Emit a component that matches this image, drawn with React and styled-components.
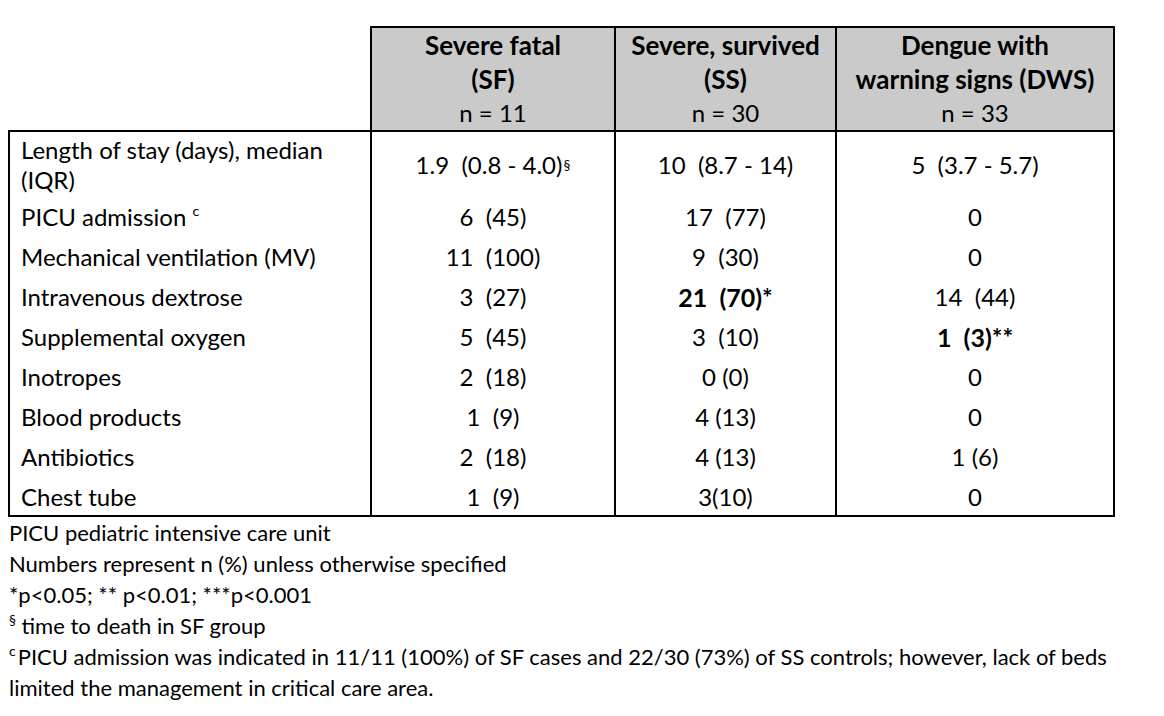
import React from "react";
import styled, { createGlobalStyle } from "styled-components";

const GlobalStyle = createGlobalStyle`
  body {
    margin: 0;
    background: #fff;
    color: #000;
    font-family: Lato, "Liberation Sans", sans-serif;
  }
`;

const columns = [
  { title: ["Severe fatal", "(SF)"], n: 11 },
  { title: ["Severe, survived", "(SS)"], n: 30 },
  { title: ["Dengue with", "warning signs (DWS)"], n: 33 },
];

// value strings keep the double spaces of the original
const rows = [
  { label: ["Length of stay (days), median", "(IQR)"], values: [["1.9  (0.8 - 4.0)", "§"], "10  (8.7 - 14)", "5  (3.7 - 5.7)"] },
  { label: "PICU admission", sup: "c", values: ["6  (45)", "17  (77)", "0"] },
  { label: "Mechanical ventilation (MV)", values: ["11  (100)", "9  (30)", "0"] },
  { label: "Intravenous dextrose", values: ["3  (27)", { bold: "21  (70)*" }, "14  (44)"] },
  { label: "Supplemental oxygen", values: ["5  (45)", "3  (10)", { bold: "1  (3)**" }] },
  { label: "Inotropes", values: ["2  (18)", "0 (0)", "0"] },
  { label: "Blood products", values: ["1  (9)", "4 (13)", "0"] },
  { label: "Antibiotics", values: ["2  (18)", "4 (13)", "1 (6)"] },
  { label: "Chest tube", values: ["1  (9)", "3(10)", "0"] },
];

const Page = styled.div`
  padding: 26px 0 0 8px;
`;

const Grid = styled.div`
  display: grid;
  grid-template-columns: 362px 244px 221px 280px;
  width: 1107px;
  font-size: 24px;
`;

const Corner = styled.div`
  border-bottom: 2px solid #000;
`;

const HeadCell = styled.div`
  background: #cacaca;
  border: 2px solid #000;
  border-right-width: ${(p) => (p.$last ? "2px" : "0")};
  text-align: center;
  line-height: 34px;
`;

const HeadTitle = styled.div`
  font-weight: 700;
  font-size: 26px;
`;

const Cell = styled.div`
  display: flex;
  align-items: center;
  justify-content: ${(p) => (p.$label ? "flex-start" : "center")};
  border-left: 2px solid #000;
  border-right: ${(p) => (p.$last ? "2px solid #000" : "0")};
  border-bottom: ${(p) => (p.$bottom ? "2px solid #000" : "0")};
  padding: ${(p) => (p.$first ? "3px 0 2px" : p.$bottom ? "5px 0 3px" : "5px 0")};
  padding-left: ${(p) => (p.$label ? "11px" : "0")};
  line-height: 30px;
  white-space: pre;
`;

const LabelText = styled.div``;

const Bold = styled.span`
  font-weight: 700;
  font-size: 25px;
`;

const Sup = styled.sup`
  font-size: 14px;
  line-height: 0;
  vertical-align: ${(p) => p.$shift || "9px"};
  margin-left: ${(p) => p.$gap || "0"};
  margin-right: ${(p) => p.$after || "0"};
`;

const Notes = styled.div`
  font-size: 22px;
  line-height: 31px;
  padding-left: 1px;
  white-space: nowrap;
`;

const Note = styled.div``;

function renderValue(v) {
  if (typeof v === "string") return v;
  if (Array.isArray(v))
    return (
      <>
        {v[0]}
        <Sup $gap="1px">{v[1]}</Sup>
      </>
    );
  return <Bold>{v.bold}</Bold>;
}

export default function App() {
  return (
    <Page>
      <GlobalStyle />
      <Grid>
        <Corner />
        {columns.map((c, i) => (
          <HeadCell key={i} $last={i === columns.length - 1}>
            {c.title.map((t) => (
              <HeadTitle key={t}>{t}</HeadTitle>
            ))}
            <div>n = {c.n}</div>
          </HeadCell>
        ))}

        {rows.map((r, ri) => {
          const first = ri === 0;
          const bottom = ri === rows.length - 1;
          return (
            <React.Fragment key={ri}>
              <Cell $label $first={first} $bottom={bottom}>
                {Array.isArray(r.label) ? (
                  <LabelText>
                    {r.label[0]}
                    <br />
                    {r.label[1]}
                  </LabelText>
                ) : (
                  <LabelText>
                    {r.label}
                    {r.sup && (
                      <Sup $gap="6px" $shift="10px">
                        {r.sup}
                      </Sup>
                    )}
                  </LabelText>
                )}
              </Cell>
              {r.values.map((v, vi) => (
                <Cell key={vi} $first={first} $bottom={bottom} $last={vi === r.values.length - 1}>
                  {renderValue(v)}
                </Cell>
              ))}
            </React.Fragment>
          );
        })}
      </Grid>

      <Notes>
        <Note>PICU pediatric intensive care unit</Note>
        <Note>Numbers represent n (%) unless otherwise specified</Note>
        <Note>*p&lt;0.05; ** p&lt;0.01; ***p&lt;0.001</Note>
        <Note>
          <Sup $shift="9px">§</Sup> time to death in SF group
        </Note>
        <Note>
          <Sup $shift="9px" $after="2px">
            c
          </Sup>
          PICU admission was indicated in 11/11 (100%) of SF cases and 22/30 (73%) of SS controls; however, lack of beds
        </Note>
        <Note>limited the management in critical care area.</Note>
      </Notes>
    </Page>
  );
}
